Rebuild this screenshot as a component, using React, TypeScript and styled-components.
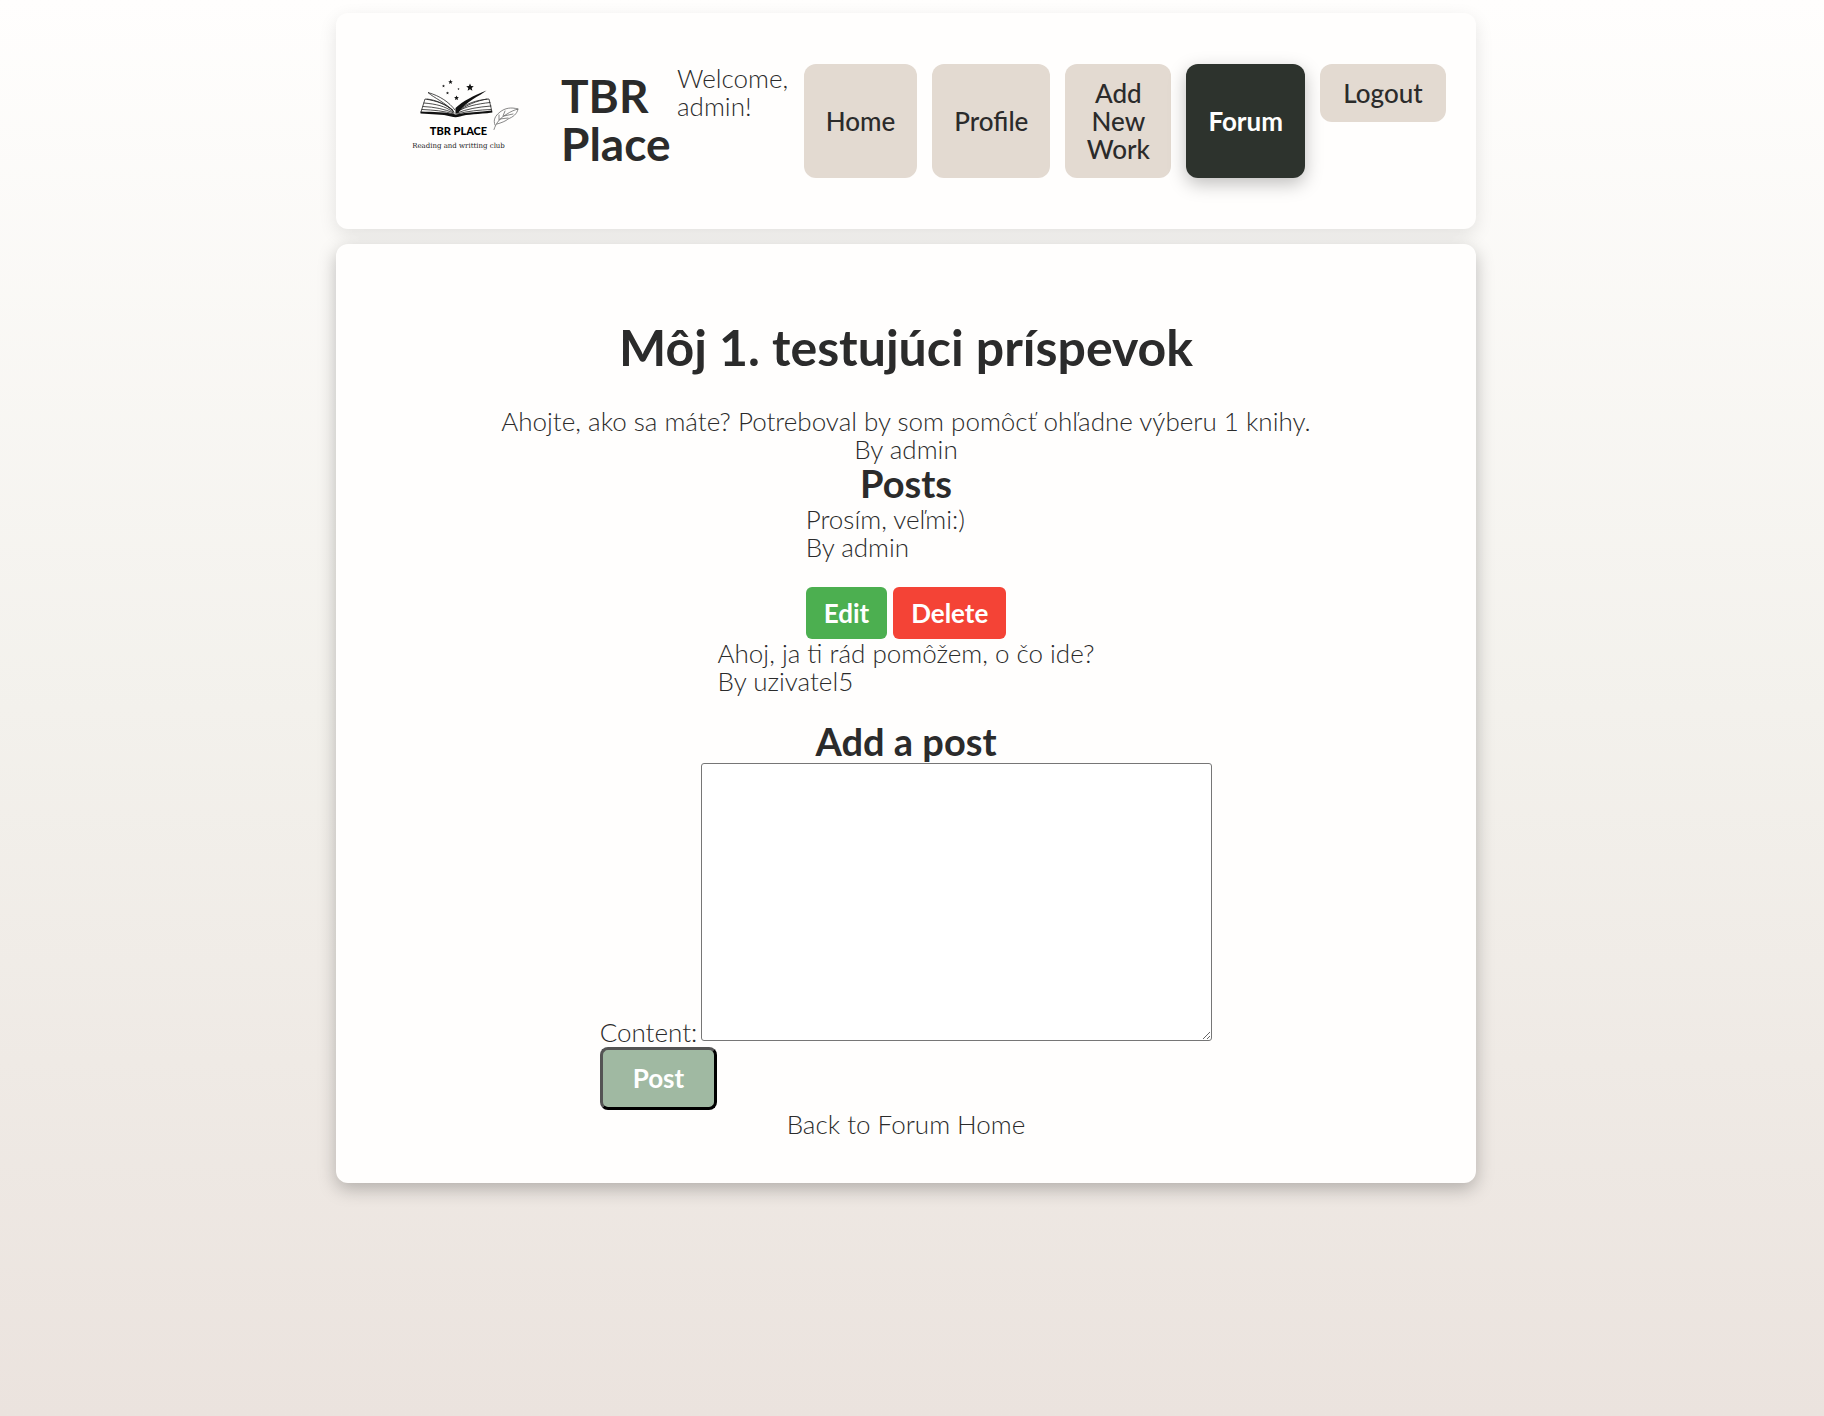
import React, { useState } from 'react';
import styled, { createGlobalStyle, css } from 'styled-components';

const ink = '#2b2b2b';
const paper = '#fffefd';
const sand = '#e3dad1';

const GlobalStyle = createGlobalStyle`
  *, *::before, *::after { box-sizing: border-box; }
  html { min-height: 100%; background: linear-gradient(#fffefd 0%, #f3f1ec 50%, #ebe3de 100%); }
  body {
    margin: 0;
    font-family: Lato, "Open Sans", sans-serif;
    font-size: 26px;
    line-height: 28px;
    font-weight: 300;
    color: ${ink};
  }
`;

const Page = styled.div`
  display: flex;
  flex-direction: column;
  align-items: center;
  gap: 15px;
  padding: 13px 12px 24px 0;
`;

const card = css`
  width: 100%;
  max-width: 1140px;
  border-radius: 12px;
  background: ${paper};
`;

const Header = styled.header`
  ${card}
  display: flex;
  align-items: flex-start;
  padding: 51px 30px 51px 60px;
  box-shadow: 0 6px 18px rgba(0, 0, 0, 0.1);
`;

const Logo = styled.svg`
  width: 165px;
  height: 113px;
  flex: none;
`;

const Brand = styled.h1`
  width: 116px;
  flex: none;
  align-self: center;
  margin: 0;
  padding-bottom: 2px;
  font-size: 46px;
  line-height: 48px;
  font-weight: 700;
`;

const Welcome = styled.p`
  flex: 1;
  margin: 0;
`;

const Nav = styled.nav`
  display: flex;
  align-items: flex-start;
  gap: 15px;
`;

const NavList = styled.ul`
  display: flex;
  gap: 15px;
  margin: 0;
  padding: 0;
  list-style: none;
`;

const NavItem = styled.li`
  display: flex;
`;

const navButton = css`
  display: flex;
  align-items: center;
  justify-content: center;
  padding: 15px 22px;
  border: 0;
  border-radius: 12px;
  background: ${sand};
  color: ${ink};
  font: inherit;
  font-weight: 500;
  text-align: center;
  text-decoration: none;
`;

const NavLink = styled.a<{ $active?: boolean; $narrow?: boolean }>`
  ${navButton}
  ${({ $narrow }) => $narrow && 'width: 106px; padding: 15px 20px;'}
  ${({ $active }) =>
    $active &&
    css`
      background: #2d332d;
      color: ${paper};
      font-weight: 700;
      box-shadow: 0 6px 18px rgba(0, 0, 0, 0.25);
    `}
`;

const LogoutButton = styled.button`
  ${navButton}
  min-width: 126px;
`;

const Main = styled.main`
  ${card}
  display: flex;
  flex-direction: column;
  align-items: center;
  padding: 45px;
  box-shadow: 0 6px 18px rgba(0, 0, 0, 0.25);
`;

const Title = styled.h1`
  margin: 31px 0 32px;
  font-size: 50px;
  line-height: 55px;
  font-weight: 700;
`;

const Text = styled.p`
  margin: 0;
`;

const Heading = styled.h2`
  margin: 0;
  padding-bottom: 2px;
  font-size: 38px;
  line-height: 40px;
  font-weight: 700;
`;

const Post = styled.article`
  min-height: 82px;
`;

const Actions = styled.div`
  display: flex;
  gap: 6px;
  margin-top: 26px;
`;

const ActionButton = styled.button<{ $color: string }>`
  padding: 12px 18px;
  border: 0;
  border-radius: 6px;
  background: ${({ $color }) => $color};
  color: #fff;
  font: inherit;
  font-weight: 700;
`;

const Form = styled.form`
  display: flex;
  flex-direction: column;
  align-items: flex-start;
  gap: 6px;
`;

const Field = styled.div`
  display: flex;
  align-items: flex-end;
  gap: 4px;
`;

const Label = styled.label`
  line-height: 18px;
`;

const TextArea = styled.textarea`
  width: 511px;
  height: 278px;
  padding: 3px;
  border: 1px solid #767676;
  border-radius: 3px;
  background: #fff;
  font: inherit;
`;

const SubmitButton = styled.button`
  padding: 14px 30px 15px;
  border: 3px outset #000;
  border-radius: 8px;
  background: #a0b9a2;
  color: #fff;
  font: inherit;
  font-weight: 700;
`;

const BackLink = styled.a`
  color: inherit;
  text-decoration: none;
`;

const star = (cx: number, cy: number, r: number) =>
  Array.from({ length: 10 }, (_, i) => {
    const a = (i * Math.PI) / 5 - Math.PI / 2;
    const d = i % 2 ? r * 0.45 : r;
    return `${(cx + d * Math.cos(a)).toFixed(2)},${(cy + d * Math.sin(a)).toFixed(2)}`;
  }).join(' ');

const stars: [number, number, number][] = [
  [54.5, 18, 2.4],
  [74, 23.5, 4],
  [47.5, 22, 1.5],
  [62.5, 25, 1.1],
  [51.5, 29, 1.6],
  [60.5, 34, 2.6],
];

function BrandLogo() {
  return (
    <Logo viewBox="0 0 165 113" role="img" aria-label="TBR Place reading and writting club">
      {stars.map(([x, y, r]) => (
        <polygon key={`${x}-${y}`} points={star(x, y, r)} fill="#111" />
      ))}
      <g fill="none" stroke="#222" strokeWidth="0.8" strokeLinecap="round" strokeLinejoin="round">
        <path d="M59 46C53 38 44 32 32 28.500C38 34 49 38 58 48" />
        <path d="M57 47C50 40 41 37 29 35L25 48" />
        <path d="M57 48C49 42 40 40 28 39M58 49C48 45 39 43 27 42.500M58 50C48 47 38 46 26 45.500M31 35C40 36 49 40 57 46" />
        <path d="M61 47C69 40 80 36 93 35L96 48" />
        <path d="M61 48C70 42 81 40 94 38.500M61 49C71 45 82 43 95 42M61 50C72 47 83 46 95 45.500M91 35C80 37 71 41 62 47" />
        <path
          d="M98 65.500C100 59 104 54 111 50C114 48 118 46 122 45M99 61C97 56 99 52 104 48C109 44 115 43 122 45C121 50 117 53 112 55C110 57 105 59 101 60M104 55L112 54M108 52L117 50M103 56L103 51M107 52L109 47"
          stroke="#555"
          strokeWidth="0.7"
        />
      </g>
      <path d="M59.500 44C67 37 77 32 90.500 26.500C84 32 70 37 62.500 48.500L59.500 50Z" fill="#111" />
      <path d="M24.500 47.500C37 48 50 48 60 50.500C71 48 83 48 96 46.500L96 48.500C83 50.500 71 50 64 52.500C61 53.500 58 53.500 55 52.500C46 50 36 50.500 24.500 49.500Z" fill="#111" />
      <text x="62.500" y="71" textAnchor="middle" fontFamily="Lato, sans-serif" fontSize="11" fontWeight="900" fill="#000">
        TBR PLACE
      </text>
      <text x="62.500" y="84" textAnchor="middle" fontFamily="'DejaVu Serif', serif" fontSize="7" fontWeight="400" fill="#222">
        Reading and writting club
      </text>
    </Logo>
  );
}

const links = [
  { label: 'Home' },
  { label: 'Profile' },
  { label: 'Add New Work', narrow: true },
  { label: 'Forum', active: true },
];

export default function App() {
  const [content, setContent] = useState('');
  return (
    <>
      <GlobalStyle />
      <Page>
        <Header>
          <BrandLogo />
          <Brand>TBR Place</Brand>
          <Welcome>Welcome, admin!</Welcome>
          <Nav>
            <NavList>
              {links.map(({ label, active, narrow }) => (
                <NavItem key={label}>
                  <NavLink href="#" $active={active} $narrow={narrow} aria-current={active ? 'page' : undefined}>
                    {label}
                  </NavLink>
                </NavItem>
              ))}
            </NavList>
            <LogoutButton type="button">Logout</LogoutButton>
          </Nav>
        </Header>
        <Main>
          <Title>Môj 1. testujúci príspevok</Title>
          <Text>Ahojte, ako sa máte? Potreboval by som pomôcť ohľadne výberu 1 knihy.</Text>
          <Text>By admin</Text>
          <Heading>Posts</Heading>
          <Post>
            <Text>Prosím, veľmi:)</Text>
            <Text>By admin</Text>
            <Actions>
              <ActionButton type="button" $color="#4caf50">Edit</ActionButton>
              <ActionButton type="button" $color="#f44336">Delete</ActionButton>
            </Actions>
          </Post>
          <Post>
            <Text>Ahoj, ja ti rád pomôžem, o čo ide?</Text>
            <Text>By uzivatel5</Text>
          </Post>
          <Heading>Add a post</Heading>
          <Form onSubmit={(e) => e.preventDefault()}>
            <Field>
              <Label htmlFor="content">Content:</Label>
              <TextArea id="content" value={content} onChange={(e) => setContent(e.target.value)} />
            </Field>
            <SubmitButton type="submit">Post</SubmitButton>
          </Form>
          <BackLink href="#">Back to Forum Home</BackLink>
        </Main>
      </Page>
    </>
  );
}
